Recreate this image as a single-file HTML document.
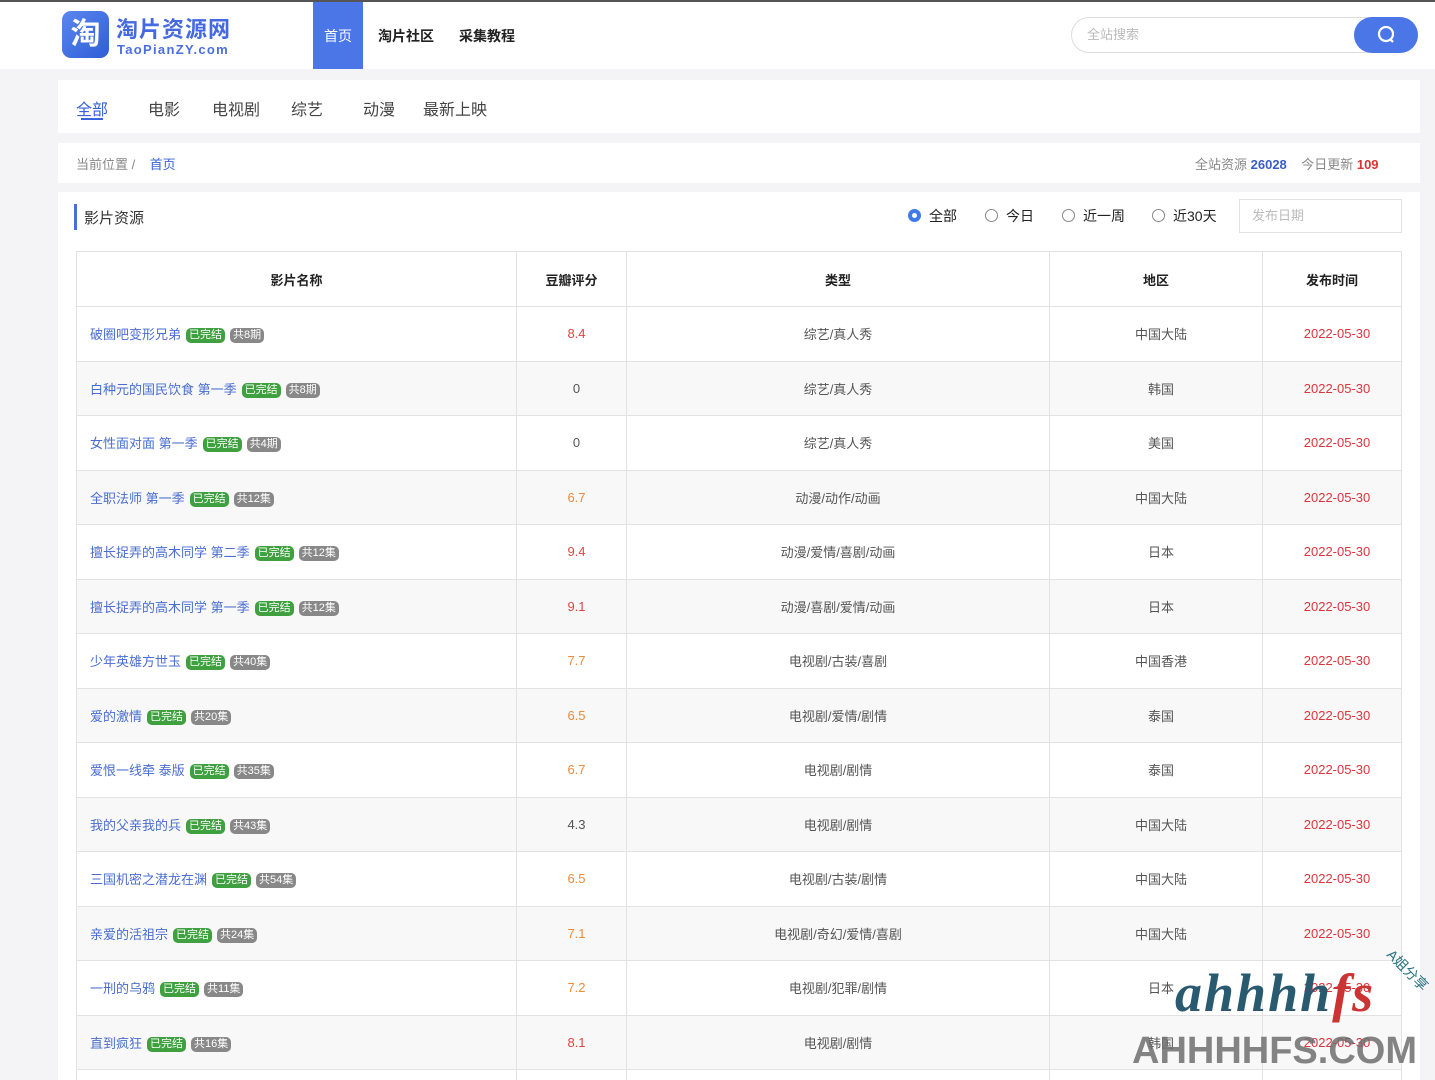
<!DOCTYPE html>
<html><head><meta charset="utf-8"><style>
*{margin:0;padding:0;box-sizing:border-box}
html,body{width:1435px;height:1080px;overflow:hidden}
body{background:#f4f4f6;font-family:"Liberation Sans","Noto Sans CJK SC",sans-serif;position:relative}
.top{position:absolute;left:0;top:0;width:1435px;height:69px;background:#fff;border-top:2px solid #555}
.logo{position:absolute;left:62px;top:9px;width:47px;height:47px;border-radius:9px;background:linear-gradient(135deg,#5b86f0,#2f5ed6);color:#fff;font-size:30px;font-weight:bold;text-align:center;line-height:47px}
.lt{position:absolute;left:116px;top:10px;font-size:22px;font-weight:bold;color:#4469e0;letter-spacing:1px}
.ls{position:absolute;left:117px;top:40px;font-size:13px;font-weight:bold;color:#4a6ee0;letter-spacing:1.3px}
.nv{position:absolute;top:0;height:67px;line-height:69px;font-size:14px;color:#222;font-weight:bold}
.search{position:absolute;left:1071px;top:15px;width:347px;height:36px;border:1px solid #ddd;border-radius:18px;font-size:13px;color:#bbb;line-height:34px;padding-left:15px}
.sbtn{position:absolute;left:1354px;top:15px;width:64px;height:36px;border-radius:18px;background:#4a76e8}
.card{position:absolute;left:58px;width:1362px;background:#fff}
.tab{position:absolute;top:96px;font-size:16px;color:#444}
table{position:absolute;left:76px;top:251px;border-collapse:collapse;table-layout:fixed;width:1325px}
td,th{border:1px solid #e2e2e2;text-align:center;font-size:13px;color:#555;height:54.5px;font-weight:normal}
th{font-weight:bold;color:#222;height:55px}
tr:nth-child(odd) td{background:#f8f8f8}
td.n{text-align:left;padding-left:13px;color:#4a6dd0}
td:nth-child(2){padding-left:10px}
td:nth-child(4){padding-left:10px}
td:nth-child(5){padding-left:10px}
.g,.c{display:inline-block;font-size:11px;color:#fff;border-radius:5px;padding:0 3px;line-height:15px;margin-left:5px;vertical-align:1px}
.g{background:#3ea03e}.c{background:#888}
.r{color:#e04343}.o{color:#ef8a36}.d{color:#e0333c}
.radio{position:absolute;top:206px;font-size:14px;color:#222}
.radio i{display:inline-block;width:13px;height:13px;border:1px solid #888;border-radius:50%;vertical-align:-1px;margin-right:8px}
</style></head><body>
<div class="top">
<div class="logo">淘</div>
<div class="lt">淘片资源网</div>
<div class="ls">TaoPianZY.com</div>
<div class="nv" style="left:313px;width:50px;background:#4a76e8;color:#fff;text-align:center;font-weight:normal">首页</div>
<div class="nv" style="left:378px">淘片社区</div>
<div class="nv" style="left:459px">采集教程</div>
<div class="search">全站搜索</div>
<div class="sbtn"><svg width="64" height="36"><circle cx="32" cy="17" r="7" fill="none" stroke="#fff" stroke-width="2.2"/><path d="M36 22l3 3" stroke="#fff" stroke-width="2.2"/></svg></div>
</div>
<div class="card" style="top:80px;height:53px"></div>
<div class="tab" style="left:76px;color:#3a63d8">全部</div>
<div style="position:absolute;left:81px;top:118px;width:22px;height:2px;background:#3a63d8"></div>
<div class="tab" style="left:148px">电影</div>
<div class="tab" style="left:212px">电视剧</div>
<div class="tab" style="left:291px">综艺</div>
<div class="tab" style="left:363px">动漫</div>
<div class="tab" style="left:423px">最新上映</div>
<div class="card" style="top:143px;height:40px"></div>
<div style="position:absolute;left:76px;top:154px;font-size:13px;color:#888">当前位置 / &nbsp;&nbsp;&nbsp;<span style="color:#3a63d8">首页</span></div>
<div style="position:absolute;left:1195px;top:154px;font-size:13px;color:#888">全站资源 <b style="color:#3a5ec8">26028</b> &nbsp;&nbsp;&nbsp;今日更新 <b style="color:#d33">109</b></div>
<div class="card" style="top:192px;height:900px"></div>
<div style="position:absolute;left:74px;top:204px;width:3px;height:26px;background:#4a6ee0"></div>
<div style="position:absolute;left:84px;top:207px;font-size:15px;color:#333">影片资源</div>
<div class="radio" style="left:908px"><i style="border:4px solid #3f7be8;background:#fff"></i>全部</div>
<div class="radio" style="left:985px"><i></i>今日</div>
<div class="radio" style="left:1062px"><i></i>近一周</div>
<div class="radio" style="left:1152px"><i></i>近30天</div>
<div style="position:absolute;left:1239px;top:199px;width:163px;height:34px;border:1px solid #e2e2e2;font-size:13px;color:#bbb;line-height:32px;padding-left:12px">发布日期</div>
<table>
<colgroup><col style="width:440px"><col style="width:110px"><col style="width:423px"><col style="width:213px"><col style="width:139px"></colgroup>
<tr><th>影片名称</th><th>豆瓣评分</th><th>类型</th><th>地区</th><th>发布时间</th></tr>
<tr><td class="n">破圈吧变形兄弟<span class="g">已完结</span><span class="c">共8期</span></td><td class="r">8.4</td><td>综艺/真人秀</td><td>中国大陆</td><td class="d">2022-05-30</td></tr>
<tr><td class="n">白种元的国民饮食 第一季<span class="g">已完结</span><span class="c">共8期</span></td><td>0</td><td>综艺/真人秀</td><td>韩国</td><td class="d">2022-05-30</td></tr>
<tr><td class="n">女性面对面 第一季<span class="g">已完结</span><span class="c">共4期</span></td><td>0</td><td>综艺/真人秀</td><td>美国</td><td class="d">2022-05-30</td></tr>
<tr><td class="n">全职法师 第一季<span class="g">已完结</span><span class="c">共12集</span></td><td class="o">6.7</td><td>动漫/动作/动画</td><td>中国大陆</td><td class="d">2022-05-30</td></tr>
<tr><td class="n">擅长捉弄的高木同学 第二季<span class="g">已完结</span><span class="c">共12集</span></td><td class="r">9.4</td><td>动漫/爱情/喜剧/动画</td><td>日本</td><td class="d">2022-05-30</td></tr>
<tr><td class="n">擅长捉弄的高木同学 第一季<span class="g">已完结</span><span class="c">共12集</span></td><td class="r">9.1</td><td>动漫/喜剧/爱情/动画</td><td>日本</td><td class="d">2022-05-30</td></tr>
<tr><td class="n">少年英雄方世玉<span class="g">已完结</span><span class="c">共40集</span></td><td class="o">7.7</td><td>电视剧/古装/喜剧</td><td>中国香港</td><td class="d">2022-05-30</td></tr>
<tr><td class="n">爱的激情<span class="g">已完结</span><span class="c">共20集</span></td><td class="o">6.5</td><td>电视剧/爱情/剧情</td><td>泰国</td><td class="d">2022-05-30</td></tr>
<tr><td class="n">爱恨一线牵 泰版<span class="g">已完结</span><span class="c">共35集</span></td><td class="o">6.7</td><td>电视剧/剧情</td><td>泰国</td><td class="d">2022-05-30</td></tr>
<tr><td class="n">我的父亲我的兵<span class="g">已完结</span><span class="c">共43集</span></td><td>4.3</td><td>电视剧/剧情</td><td>中国大陆</td><td class="d">2022-05-30</td></tr>
<tr><td class="n">三国机密之潜龙在渊<span class="g">已完结</span><span class="c">共54集</span></td><td class="o">6.5</td><td>电视剧/古装/剧情</td><td>中国大陆</td><td class="d">2022-05-30</td></tr>
<tr><td class="n">亲爱的活祖宗<span class="g">已完结</span><span class="c">共24集</span></td><td class="o">7.1</td><td>电视剧/奇幻/爱情/喜剧</td><td>中国大陆</td><td class="d">2022-05-30</td></tr>
<tr><td class="n">一刑的乌鸦<span class="g">已完结</span><span class="c">共11集</span></td><td class="o">7.2</td><td>电视剧/犯罪/剧情</td><td>日本</td><td class="d">2022-05-30</td></tr>
<tr><td class="n">直到疯狂<span class="g">已完结</span><span class="c">共16集</span></td><td class="r">8.1</td><td>电视剧/剧情</td><td>韩国</td><td class="d">2022-05-30</td></tr>
<tr><td class="n"></td><td></td><td></td><td></td><td></td></tr>
</table>
<div style="position:absolute;left:1175px;top:962px;font-size:54px;font-family:'Liberation Serif',serif;font-style:italic;font-weight:bold;color:#2a5a70;letter-spacing:2px">ahhhh<span style="color:#c33">fs</span></div>
<div style="position:absolute;left:1382px;top:960px;font-size:14px;color:#2a7080;transform:rotate(45deg)">A姐分享</div>
<div style="position:absolute;left:1132px;top:1030px;font-size:38px;font-weight:bold;color:rgba(110,110,110,.85)">AHHHHFS.COM</div>
</body></html>
